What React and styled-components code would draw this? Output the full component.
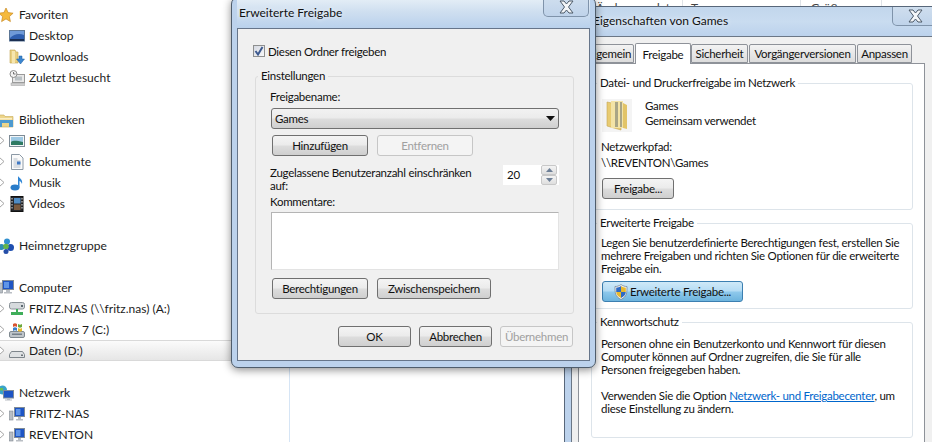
// App.jsx
import React from 'react';
import styled, { createGlobalStyle, css } from 'styled-components';

const icons = {
  star: (
    <path d="M8 1l2.100 4.600 5 .6-3.700 3.400 1 5L8 11.900 3.600 14.600l1-5L.9 6.200l5-.6z" fill="#f5b93c" stroke="#c98a22" strokeWidth=".7" />
  ),
  desktop: (
    <>
      <rect x="0.500" y="2.500" width="15" height="10.500" fill="#2f5fb0" stroke="#5c7696" />
      <path d="M1 3h14v4C10 5 5 6 1 10z" fill="#6f9ad8" />
      <rect x="1" y="11" width="14" height="2" fill="#1b2f52" />
    </>
  ),
  downloads: (
    <>
      <path d="M1 1h5l1 2h2v11H1z" fill="#e9cf80" stroke="#c4a550" strokeWidth=".6" />
      <path d="M3 2h3v12H3z" fill="#f6e6ae" />
      <path d="M10 7h3v3h2.500l-4 5-4-5H10z" fill="#3b86d0" stroke="#1f5c9e" strokeWidth=".5" />
    </>
  ),
  recent: (
    <>
      <rect x="3.500" y="4.500" width="12" height="8" fill="#e8e8e8" stroke="#9a9a9a" />
      <rect x="6" y="6.500" width="7" height="4" fill="#b9c0c4" />
      <rect x="2" y="13" width="14" height="2.500" fill="#cfcfcf" stroke="#a0a0a0" strokeWidth=".5" />
      <circle cx="4.500" cy="4" r="3.500" fill="#f2f2f2" stroke="#8c8c8c" />
      <path d="M4.500 2v2h2" fill="none" stroke="#555" strokeWidth=".8" />
    </>
  ),
  library: (
    <>
      <path d="M0 3h6l1 1.500h8V15H0z" fill="#edd58a" stroke="#c7a956" strokeWidth=".6" />
      <path d="M0 8h15v7H11V11H4v4H0z" fill="#4d9ad0" />
      <path d="M1 6h13v1.500H1z" fill="#f9edc6" />
    </>
  ),
  pictures: (
    <>
      <rect x="0.500" y="2.500" width="15" height="11" fill="#f3f6f8" stroke="#7d8b96" />
      <rect x="2" y="4" width="12" height="8" fill="#9ec9e4" />
      <path d="M2 9c3-2 6-1 12 0v3H2z" fill="#2e7a63" />
    </>
  ),
  docs: (
    <>
      <path d="M2.500.500h8l3.500 3.500v11.500H2.500z" fill="#fbfbfb" stroke="#8d9aa6" />
      <path d="M4.500 5h4M4.500 7h7M4.500 9h7M4.500 11h7M4.500 13h7" stroke="#a7b3bf" strokeWidth=".8" />
      <rect x="8" y="7.500" width="3.500" height="3" fill="#3f78c4" />
    </>
  ),
  music: (
    <>
      <ellipse cx="6" cy="12.500" rx="4.500" ry="3" fill="#2a7cc9" />
      <path d="M9 12V1c1 2 5 3 4 8-.6-2-2-3-2.500-3v6.500z" fill="#2f86d6" />
    </>
  ),
  videos: (
    <>
      <rect x="2" y="0.500" width="12" height="15" fill="#26282c" stroke="#111" />
      <rect x="5" y="2" width="6.500" height="5.500" fill="#4f8cc4" />
      <rect x="5" y="8.500" width="6.500" height="5.500" fill="#7a5a3e" />
      <path d="M3 2v1.500M3 5v1.500M3 8v1.500M3 11v1.500M13 2v1.500M13 5v1.500M13 8v1.500M13 11v1.500" stroke="#ddd" />
    </>
  ),
  homegroup: (
    <>
      <circle cx="9" cy="3.500" r="3" fill="#2f8fcf" />
      <circle cx="12.500" cy="9.500" r="3.500" fill="#1f4fb0" />
      <circle cx="3.500" cy="9" r="3" fill="#2e8fb5" />
      <circle cx="8" cy="8.500" r="2.800" fill="#63b548" />
      <circle cx="8" cy="13.500" r="2.500" fill="#254ea8" />
    </>
  ),
  computer: (
    <>
      <rect x="0" y="3" width="4.500" height="10" fill="#b8bec4" stroke="#7f8790" strokeWidth=".6" />
      <rect x="4.500" y="0.500" width="11" height="9" fill="#1e55c4" stroke="#7f8b97" />
      <path d="M6 2h5v6H6z" fill="#5e95e8" />
      <path d="M8 10h4v2h2v1.500H6V12h2z" fill="#b9bec4" />
    </>
  ),
  nas: (
    <>
      <rect x="0.500" y="1.500" width="15" height="6.500" rx="2" fill="#d6dadd" stroke="#8a9298" />
      <rect x="12" y="4" width="2" height="2" fill="#5b6870" />
      <path d="M7 8h2v3h5v3H2v-3h5z" fill="#3fae5a" />
    </>
  ),
  windows: (
    <>
      <rect x="0.500" y="9.500" width="15" height="6" rx="1.500" fill="#bfc5ca" stroke="#7f8990" />
      <path d="M4 2c1.500-1 2.500-1 4 0v3C6.500 4 5.500 4 4 5z" fill="#d9542f" />
      <path d="M9 2c1.500 1 2.500 1 4 0v3c-1.500 1-2.500 1-4 0z" fill="#6ea83a" />
      <path d="M4 6c1.500-1 2.500-1 4 0v3C6.500 8 5.500 8 4 9z" fill="#3b7fcb" />
      <path d="M9 6c1.500 1 2.500 1 4 0v3c-1.500 1-2.500 1-4 0z" fill="#e8b92e" />
      <rect x="3" y="11.500" width="10" height="1.500" fill="#75808a" />
    </>
  ),
  drive: (
    <>
      <path d="M2.500 8.500h11l2 3v3h-15v-3z" fill="#dfe2e4" stroke="#7e868c" />
      <rect x="12" y="11.500" width="2" height="1.500" fill="#6b7278" />
    </>
  ),
  network: (
    <>
      <circle cx="4.500" cy="5" r="4.500" fill="#3aa3c9" />
      <path d="M2 3h3v2.500H2zM5 6h2v2H5z" fill="#6cc04f" />
      <rect x="5.500" y="5.500" width="10" height="7.500" fill="#1e55c4" stroke="#7f8b97" />
      <path d="M9 13h3v1.500h2v1H7v-1h2z" fill="#b9bec4" />
    </>
  ),
  pc: (
    <>
      <rect x="0.500" y="5" width="3.500" height="9" fill="#b8bec4" stroke="#7f8790" strokeWidth=".6" />
      <rect x="5.500" y="1.500" width="10" height="9" fill="#1e55c4" stroke="#7f8b97" />
      <path d="M7 3h4.500v6H7z" fill="#5e95e8" />
      <path d="M9 11h3v2h2v1.500H7V13h2z" fill="#b9bec4" />
    </>
  ),
};

const tree = [
  { id: 'fav', label: 'Favoriten', icon: 'star', top: true },
  { id: 'desk', label: 'Desktop', icon: 'desktop' },
  { id: 'down', label: 'Downloads', icon: 'downloads' },
  { id: 'rec', label: 'Zuletzt besucht', icon: 'recent' },
  { id: 'lib', label: 'Bibliotheken', icon: 'library', top: true, gap: true },
  { id: 'pics', label: 'Bilder', icon: 'pictures', arrow: true },
  { id: 'docs', label: 'Dokumente', icon: 'docs', arrow: true },
  { id: 'mus', label: 'Musik', icon: 'music', arrow: true },
  { id: 'vid', label: 'Videos', icon: 'videos', arrow: true },
  { id: 'home', label: 'Heimnetzgruppe', icon: 'homegroup', top: true, gap: true },
  { id: 'comp', label: 'Computer', icon: 'computer', top: true, gap: true },
  { id: 'a', label: 'FRITZ.NAS (\\\\fritz.nas) (A:)', icon: 'nas', arrow: true },
  { id: 'c', label: 'Windows 7 (C:)', icon: 'windows', arrow: true },
  { id: 'd', label: 'Daten (D:)', icon: 'drive', arrow: true, selected: true },
  { id: 'net', label: 'Netzwerk', icon: 'network', top: true, gap: true },
  { id: 'fritz', label: 'FRITZ-NAS', icon: 'pc', arrow: true },
  { id: 'rev', label: 'REVENTON', icon: 'pc', arrow: true },
];

const App = () => (
  <Desktop>
    <GlobalStyle />
    <Sidebar>
      {tree.map(item => (
        <TreeRow key={item.id} $gap={item.gap} $selected={item.selected}>
          {!item.top && (
            <Expander>
              {item.arrow && (
                <svg width="6" height="9" viewBox="0 0 6 9">
                  <path d="M.5.500l4.500 4-4.500 4z" fill="#fff" stroke="#a6a6a6" />
                </svg>
              )}
            </Expander>
          )}
          <TreeIcon $top={item.top} width="16" height="16" viewBox="0 0 16 16">
            {icons[item.icon]}
          </TreeIcon>
          <span>{item.label}</span>
        </TreeRow>
      ))}
    </Sidebar>

    <ListHeader>
      <HeaderCell $w={87} $pad={0}>Änderungsdatum</HeaderCell>
      <HeaderCell $w={118} $pad={8}>Typ</HeaderCell>
      <HeaderCell $w={81} $pad={10}>Größe</HeaderCell>
    </ListHeader>

    <PropertiesWindow>
      <TitleBar $h={29}>
        <TitleText $left={22}>Eigenschaften von Games</TitleText>
        <CloseButton $right={-1}>
          <CloseGlyph />
        </CloseButton>
      </TitleBar>
      <PropertiesClient>
        <TabStrip>
          <Tab $w={53} $mr={1}>Allgemein</Tab>
          <Tab $w={56} $active>Freigabe</Tab>
          <Tab $w={57} $mr={1}>Sicherheit</Tab>
          <Tab $w={107} $mr={1}>Vorgängerversionen</Tab>
          <Tab $w={55}>Anpassen</Tab>
        </TabStrip>
        <TabPanel>
          <GroupBox $h={127} $pt={13} $panel>
            <Legend $panel>Datei- und Druckerfreigabe im Netzwerk</Legend>
            <ShareRow>
              <FolderTile>
                <svg width="30" height="33" viewBox="0 0 30 33">
                  <path d="M5 3l14 3v25L5 27z" fill="#e8cb72" stroke="#c4a450" strokeWidth=".6" />
                  <path d="M9 2h12v27H9z" fill="#f3e3a6" />
                  <path d="M13 3h3v25h-3zM18 3h2v25h-2z" fill="#a9a586" />
                  <path d="M21 4l4 2v24l-4-1z" fill="#e2c468" />
                </svg>
              </FolderTile>
              <ShareText>
                <ShareLine>Games</ShareLine>
                <ShareLine>Gemeinsam verwendet</ShareLine>
              </ShareText>
            </ShareRow>
            <PathLabel>Netzwerkpfad:</PathLabel>
            <PathLine>\\REVENTON\Games</PathLine>
            <Button $w={72} $h={21} $mt={7} $ml={1}>Freigabe...</Button>
          </GroupBox>
          <GroupBox $h={86} $pt={12} $panel>
            <Legend $panel>Erweiterte Freigabe</Legend>
            <Copy>
              Legen Sie benutzerdefinierte Berechtigungen fest, erstellen Sie<br />
              mehrere Freigaben und richten Sie Optionen für die erweiterte<br />
              Freigabe ein.
            </Copy>
            <Button $w={141} $h={21} $mt={6} $ml={1} $primary>
              <svg width="14" height="16" viewBox="0 0 14 16">
                <path d="M7 .500c2 1.500 4 2 6 2 0 6 0 10-6 13-6-3-6-7-6-13 2 0 4-.5 6-2z" fill="#f2f2f2" stroke="#6c7a8a" strokeWidth=".7" />
                <path d="M7 2c1.500 1 3 1.500 4.800 1.700V8H7z" fill="#e8b92e" />
                <path d="M2.200 3.700C4 3.500 5.500 3 7 2v6H2.200z" fill="#2d69c4" />
                <path d="M7 8h4.800c-.3 2.800-1.800 4.600-4.800 6z" fill="#2d69c4" />
                <path d="M2.200 8H7v6c-3-1.400-4.500-3.200-4.800-6z" fill="#e8b92e" />
              </svg>
              Erweiterte Freigabe...
            </Button>
          </GroupBox>
          <GroupBox $h={116} $pt={14} $panel>
            <Legend $panel>Kennwortschutz</Legend>
            <Copy>
              Personen ohne ein Benutzerkonto und Kennwort für diesen<br />
              Computer können auf Ordner zugreifen, die Sie für alle<br />
              Personen freigegeben haben.
            </Copy>
            <Copy $mt={13}>
              Verwenden Sie die Option <LinkText>Netzwerk- und Freigabecenter</LinkText>, um<br />
              diese Einstellung zu ändern.
            </Copy>
          </GroupBox>
        </TabPanel>
      </PropertiesClient>
    </PropertiesWindow>

    <ShareDialog>
      <TitleBar $h={30} $bright>
        <TitleText $left={2}>Erweiterte Freigabe</TitleText>
        <CloseButton $right={1}>
          <CloseGlyph />
        </CloseButton>
      </TitleBar>
      <DialogClient>
        <CheckRow>
          <CheckBox>
            <svg width="10" height="10" viewBox="0 0 10 10">
              <path d="M1.500 5l2.500 3.500L8.500 1" fill="none" stroke="#3d5a8f" strokeWidth="2" />
            </svg>
          </CheckBox>
          Diesen Ordner freigeben
        </CheckRow>
        <GroupBox $h={238} $pt={13} $dialog>
          <Legend>Einstellungen</Legend>
          <FieldLabel>Freigabename:</FieldLabel>
          <SelectBox>
            Games
            <svg width="9" height="5" viewBox="0 0 9 5">
              <path d="M0 0h9L4.500 5z" fill="#111" />
            </svg>
          </SelectBox>
          <ButtonRow $mt={6}>
            <Button $w={96} $h={21}>Hinzufügen</Button>
            <Button $w={96} $h={21} $disabled>Entfernen</Button>
          </ButtonRow>
          <LimitRow>
            <LimitText>
              Zugelassene Benutzeranzahl einschränken<br />auf:
            </LimitText>
            <SpinBox>
              <SpinValue>20</SpinValue>
              <SpinButtons>
                <SpinButton>
                  <svg width="7" height="4" viewBox="0 0 7 4"><path d="M3.500 0L7 4H0z" fill="#6d7f96" /></svg>
                </SpinButton>
                <SpinButton>
                  <svg width="7" height="4" viewBox="0 0 7 4"><path d="M0 0h7L3.500 4z" fill="#6d7f96" /></svg>
                </SpinButton>
              </SpinButtons>
            </SpinBox>
          </LimitRow>
          <FieldLabel $mt={4}>Kommentare:</FieldLabel>
          <CommentBox />
          <ButtonRow $mt={8}>
            <Button $w={96} $h={21}>Berechtigungen</Button>
            <Button $w={114} $h={21}>Zwischenspeichern</Button>
          </ButtonRow>
        </GroupBox>
        <DialogFooter>
          <Button $w={73} $h={21}>OK</Button>
          <Button $w={73} $h={21}>Abbrechen</Button>
          <Button $w={73} $h={21} $disabled>Übernehmen</Button>
        </DialogFooter>
      </DialogClient>
    </ShareDialog>
  </Desktop>
);

export default App;

// Styled Components
const CloseGlyph = () => (
  <svg width="17" height="14" viewBox="0 0 17 14">
    <path d="M2 1h4l2.500 3L11 1h4l-4.500 6 4.500 6h-4L8.500 10 6 13H2l4.500-6z" fill="#f4f6f8" stroke="#4d5a68" strokeWidth="1" strokeLinejoin="round" />
  </svg>
);

const dialogFont = css`
  font-size: 11.5px;
  letter-spacing: -0.27px;
`;

const GlobalStyle = createGlobalStyle`
  html, body {
    margin: 0;
    padding: 0;
    background: #fff;
  }
  body {
    font-family: "Lato", "Open Sans", sans-serif;
    font-size: 12px;
    color: #111;
  }
`;

const Desktop = styled.div`
  position: relative;
  width: 932px;
  height: 442px;
  overflow: hidden;
  background: #fff;
`;

const Sidebar = styled.nav`
  width: 290px;
  height: 442px;
  box-sizing: border-box;
  padding-top: 4px;
  border-right: 1px solid #d6e5f5;
  overflow: hidden;
`;

const TreeRow = styled.div`
  display: flex;
  align-items: center;
  height: 21px;
  box-sizing: border-box;
  white-space: nowrap;
  color: #1c1c1c;
  margin-top: ${props => (props.$gap ? '21px' : '0')};
  ${props => props.$selected && `
    background: linear-gradient(#fbfbfb, #e6e6e6);
    border-top: 1px solid #d9d9d9;
    border-bottom: 1px solid #d9d9d9;
  `}
`;

const Expander = styled.span`
  display: flex;
  align-items: center;
  width: 9px;
  margin-left: -1px;
  margin-right: 1px;
  flex: none;
`;

const TreeIcon = styled.svg`
  flex: none;
  margin-left: ${props => (props.$top ? '-2px' : '0')};
  margin-right: ${props => (props.$top ? '5px' : '4px')};
`;

const ListHeader = styled.div`
  position: absolute;
  left: 596px;
  top: 0;
  display: flex;
  height: 7px;
  overflow: hidden;
  color: #444;
`;

const HeaderCell = styled.div`
  width: ${props => props.$w}px;
  box-sizing: border-box;
  padding-left: ${props => props.$pad}px;
  line-height: 16px;
  border-right: 1px solid #dfe3e8;
  white-space: nowrap;
`;

const TitleBar = styled.div`
  position: relative;
  height: ${props => props.$h}px;
  flex: none;
  background: ${props => (props.$bright
    ? 'linear-gradient(#e6eff7, #cfdff0 45%, #b9d1ec)'
    : 'linear-gradient(#c2d6ec, #c9dcf0 50%, #bcd2ec)')};
`;

const TitleText = styled.div`
  position: absolute;
  left: ${props => props.$left}px;
  bottom: 7px;
  line-height: 16px;
  white-space: nowrap;
  text-shadow: 0 0 5px rgba(255, 255, 255, 0.9);
`;

const CloseButton = styled.div`
  position: absolute;
  top: 0;
  right: ${props => props.$right}px;
  width: 46px;
  height: 19px;
  display: flex;
  align-items: center;
  justify-content: center;
  box-sizing: border-box;
  border: 1px solid #7f93aa;
  border-top: 0;
  border-radius: 0 0 5px 5px;
  background: linear-gradient(#cfdeee, #bfd3ea);
`;

const PropertiesWindow = styled.section`
  position: absolute;
  left: 564px;
  top: 6px;
  width: 380px;
  height: 450px;
  display: flex;
  flex-direction: column;
  box-sizing: border-box;
  border: 1px solid #58677a;
  border-radius: 6px 6px 0 0;
  background: #bcd2ec;
  padding: 0 6px;
  overflow: hidden;
`;

const PropertiesClient = styled.div`
  ${dialogFont}
  flex: 1;
  margin: 0 -6px 0 0;
  border-left: 1px solid #6b7786;
  border-top: 1px solid #6b7786;
  background: #f0f0f0;
  padding: 8px 0 0 6px;
`;

const TabStrip = styled.div`
  display: flex;
  align-items: flex-end;
  height: 18px;
  margin-left: 3px;
`;

const Tab = styled.div`
  width: ${props => props.$w}px;
  height: ${props => (props.$active ? '21px' : '19px')};
  box-sizing: border-box;
  flex: none;
  display: flex;
  justify-content: center;
  align-items: center;
  white-space: nowrap;
  border: 1px solid #8e9299;
  border-bottom: ${props => (props.$active ? '0' : '1px solid #8e9299')};
  border-radius: 2px 2px 0 0;
  background: ${props => (props.$active ? '#fff' : 'linear-gradient(#f3f3f3, #dcdcdc)')};
  position: relative;
  top: ${props => (props.$active ? '1px' : '0')};
  z-index: ${props => (props.$active ? 1 : 0)};
  margin-right: ${props => props.$mr || 0}px;
`;

const TabPanel = styled.div`
  width: 347px;
  height: 400px;
  box-sizing: border-box;
  padding: 19px 0 0 12px;
  background: #fff;
  border: 1px solid #8e9299;
  border-bottom: 0;
  display: flex;
  flex-direction: column;
  gap: 13px;
`;

const GroupBox = styled.div`
  position: relative;
  height: ${props => props.$h}px;
  box-sizing: border-box;
  flex: none;
  border: 1px solid ${props => (props.$panel ? '#dde4ea' : '#dcdcdc')};
  border-radius: 3px;
  width: ${props => (props.$panel ? '322px' : '319px')};
  padding: ${props => props.$pt}px ${props => (props.$panel ? '9px' : '14px')} 0;
  margin-left: ${props => (props.$dialog ? '17px' : '0')};
  margin-top: ${props => (props.$dialog ? '19px' : '0')};
  display: flex;
  flex-direction: column;
  align-items: flex-start;
`;

const Legend = styled.div`
  position: absolute;
  left: ${props => (props.$panel ? '5px' : '2px')};
  top: -9px;
  padding: 0 3px;
  line-height: 15px;
  white-space: nowrap;
  background: ${props => (props.$panel ? '#fff' : '#f0f0f0')};
`;

const ShareRow = styled.div`
  display: flex;
  gap: 13px;
  margin: 2px 0 0 1px;
`;

const FolderTile = styled.div`
  width: 30px;
  height: 33px;
  background: #f4f4f4;
  line-height: 0;
`;

const ShareText = styled.div`
  margin-top: -1px;
`;

const ShareLine = styled.div`
  line-height: 15px;
`;

const PathLabel = styled.div`
  line-height: 15px;
  margin-top: 7px;
`;

const PathLine = styled.div`
  line-height: 17px;
`;

const Copy = styled.p`
  margin: ${props => props.$mt || 0}px 0 0;
  line-height: 13px;
  white-space: nowrap;
`;

const LinkText = styled.span`
  color: #0066cc;
  text-decoration: underline;
`;

const Button = styled.div`
  width: ${props => props.$w}px;
  height: ${props => props.$h}px;
  margin-top: ${props => props.$mt || 0}px;
  margin-left: ${props => props.$ml || 0}px;
  box-sizing: border-box;
  flex: none;
  display: flex;
  align-items: center;
  justify-content: center;
  gap: 2px;
  white-space: nowrap;
  border-radius: 3px;
  border: 1px solid ${props => (props.$disabled ? '#c6c6c6' : props.$primary ? '#3c7fb1' : '#707070')};
  color: ${props => (props.$disabled ? '#a0a0a0' : '#111')};
  background: ${props => {
    if (props.$disabled) return '#f4f4f4';
    if (props.$primary) return 'linear-gradient(#cfe9f8, #b4dcf4 48%, #8fc9ec 52%, #6db4de)';
    return 'linear-gradient(#f4f4f4, #ebebeb 48%, #dddddd 52%, #cfcfcf)';
  }};
`;

const ShareDialog = styled.section`
  position: absolute;
  left: 231px;
  top: -3px;
  width: 365px;
  height: 371px;
  display: flex;
  flex-direction: column;
  box-sizing: border-box;
  border: 1px solid #4f5d6c;
  border-radius: 7px;
  background: #bcd2ec;
  padding: 0 5px 6px;
  box-shadow: 0 2px 9px rgba(0, 0, 0, 0.45);
`;

const DialogClient = styled.div`
  ${dialogFont}
  flex: 1;
  border: 1px solid #66758a;
  background: #f0f0f0;
  display: flex;
  flex-direction: column;
`;

const CheckRow = styled.div`
  display: flex;
  align-items: center;
  gap: 3px;
  margin: 16px 0 0 15px;
  height: 12px;
`;

const CheckBox = styled.span`
  width: 12px;
  height: 12px;
  box-sizing: border-box;
  border: 1px solid #8e8f8f;
  background: linear-gradient(135deg, #d5d9e2, #f8f8f8);
  display: flex;
  align-items: center;
  justify-content: center;
`;

const FieldLabel = styled.div`
  line-height: 14px;
  margin-top: ${props => props.$mt || 0}px;
`;

const SelectBox = styled.div`
  width: 288px;
  height: 21px;
  margin: 4px 0 0 1px;
  box-sizing: border-box;
  padding: 0 3px 0 3px;
  display: flex;
  align-items: center;
  justify-content: space-between;
  border: 1px solid #707070;
  border-radius: 3px;
  background: linear-gradient(#f2f2f2, #ebebeb 48%, #dddddd 52%, #cfcfcf);
`;

const ButtonRow = styled.div`
  display: flex;
  gap: 9px;
  margin: ${props => props.$mt}px 0 0 2px;
`;

const LimitRow = styled.div`
  display: flex;
  align-items: flex-start;
  justify-content: space-between;
  width: 100%;
  height: 26px;
  margin-top: 9px;
`;

const LimitText = styled.div`
  line-height: 13px;
  padding-top: 1px;
  white-space: nowrap;
`;

const SpinBox = styled.div`
  width: 56px;
  height: 20px;
  box-sizing: border-box;
  background: #fff;
  padding: 0 2px 0 4px;
  display: flex;
  align-items: center;
  justify-content: space-between;
`;

const SpinValue = styled.span`
  position: relative;
  top: -1px;
`;

const SpinButtons = styled.div`
  display: flex;
  flex-direction: column;
  width: 16px;
  height: 20px;
`;

const SpinButton = styled.div`
  flex: 1;
  display: flex;
  align-items: center;
  justify-content: center;
  border: 1px solid #c8c8c8;
  border-radius: 2px;
  background: linear-gradient(#f4f4f4, #dedede);
`;

const CommentBox = styled.div`
  width: 288px;
  height: 58px;
  margin: 3px 0 0 1px;
  box-sizing: border-box;
  background: #fff;
  border: 1px solid #b4b4b4;
  border-right-color: #e3e3e3;
  border-bottom-color: #e3e3e3;
`;

const DialogFooter = styled.div`
  display: flex;
  justify-content: flex-end;
  gap: 8px;
  margin: 12px 16px 0 0;
`;
